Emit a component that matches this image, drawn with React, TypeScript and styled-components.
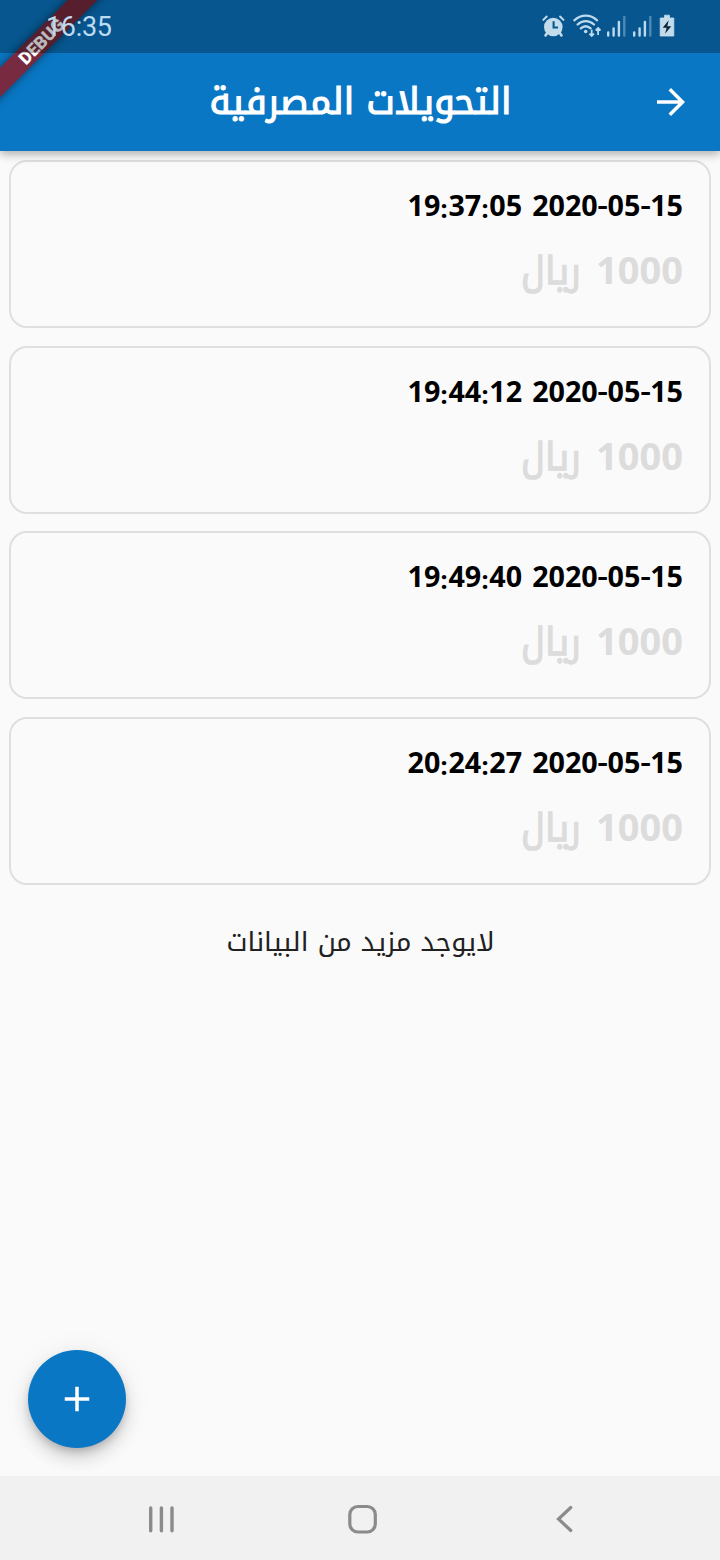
import React from "react";
import styled, { createGlobalStyle } from "styled-components";

const Global = createGlobalStyle`
  * { box-sizing: border-box; }
  html, body { margin: 0; padding: 0; background: #fafafa; }
`;

const Screen = styled.div`
  position: relative;
  display: flex;
  flex-direction: column;
  width: 720px;
  height: 1560px;
  overflow: hidden;
  background: #fafafa;
  font-family: "Noto Sans", "Noto Kufi Arabic", "DejaVu Sans", sans-serif;
`;

const Header = styled.header`
  position: relative;
  z-index: 1;
  flex: none;
  height: 151px;
  background: #0a77c5;
  box-shadow: 0 3px 7px rgba(0, 0, 0, 0.2), 0 7px 9px rgba(0, 0, 0, 0.06), 0 2px 14px rgba(0, 0, 0, 0.05);
`;

const StatusBar = styled.div`
  position: relative;
  z-index: 2;
  height: 53px;
  padding: 0 45px 0 46px;
  display: flex;
  align-items: center;
  justify-content: space-between;
  background: rgba(0, 0, 0, 0.27);
`;

const Clock = styled.span`
  padding-top: 1px;
  font: 400 27px/53px Roboto, sans-serif;
  letter-spacing: -0.3px;
  color: #bcdaf0;
`;

const StatusIcons = styled.svg`
  display: block;
  width: 135px;
  height: 28px;
`;

const TitleBar = styled.div`
  height: 98px;
  padding: 0 28px;
  display: grid;
  grid-template-columns: 42px 1fr 42px;
  align-items: center;
  direction: rtl;
`;

const Title = styled.h1`
  margin: 0;
  padding-left: 1px;
  text-align: center;
  font-family: "Noto Kufi Arabic", "DejaVu Sans", sans-serif;
  font-size: 36.4px;
  font-weight: 400;
  line-height: 56px;
  color: #fff;
  -webkit-text-stroke: 1.2px #fff;
  white-space: nowrap;
`;

const Banner = styled.div`
  position: absolute;
  z-index: 1;
  top: 31px;
  left: -59px;
  width: 200px;
  height: 21px;
  padding-left: 1px;
  transform: rotate(-45deg);
  background: #782b40;
  box-shadow: 0 0 10px rgba(0, 0, 0, 0.5);
  color: #fff;
  text-align: center;
  font: 900 17.6px/22px Roboto, sans-serif;
`;

const List = styled.main`
  flex: 1;
  display: flex;
  flex-direction: column;
  gap: 17.6px;
  padding: 9px 9px 0;
  direction: rtl;
`;

const Card = styled.article`
  flex: none;
  height: 168px;
  padding: 22px 26px 0;
  border: 2px solid #dfdfdf;
  border-radius: 18px;
`;

const Stamp = styled.div`
  display: flex;
  gap: 10px;
  height: 42px;
  line-height: 42px;
  font-size: 28.7px;
  font-weight: 700;
  color: #000;
`;

const Ltr = styled.span`
  direction: ltr;
  white-space: nowrap;
`;

const Colon = styled.span`
  display: inline-block;
  transform: translateY(3px) scale(0.88);
`;

const Hyphen = styled.span`
  display: inline-block;
  margin: 0 0.3px;
  transform: scale(1.12, 0.85);
`;

const Amount = styled.div`
  display: flex;
  gap: 15px;
  height: 54px;
  margin-top: 16px;
  line-height: 54px;
  font-size: 38px;
  font-weight: 700;
  color: #dcdcdc;
`;

const Unit = styled.span`
  font-family: "Noto Kufi Arabic", "DejaVu Sans", sans-serif;
  font-size: 38px;
  font-weight: 400;
  -webkit-text-stroke: 1.4px #dcdcdc;
  transform: translateY(2px) scaleX(0.92);
  transform-origin: right center;
`;

const Footer = styled.p`
  margin: 21px 0 0;
  padding-left: 1px;
  text-align: center;
  font-family: "Noto Kufi Arabic", "DejaVu Sans", sans-serif;
  font-size: 26.9px;
  line-height: 40px;
  color: #212121;
`;

const Fab = styled.button`
  position: absolute;
  left: 28px;
  top: 1350px;
  width: 98px;
  height: 98px;
  padding: 0;
  border: 0;
  border-radius: 50%;
  display: grid;
  place-items: center;
  background: #0a77c5;
  box-shadow: 0 5px 9px -2px rgba(0, 0, 0, 0.2), 0 10px 17px rgba(0, 0, 0, 0.14), 0 2px 31px rgba(0, 0, 0, 0.06);
`;

const NavBar = styled.nav`
  flex: none;
  height: 84px;
  display: grid;
  grid-template-columns: 200.5px 203px 30px;
  align-items: center;
  padding: 2px 0 0 146px;
  background: #f1f1f1;
`;

const times = ["19:37:05", "19:44:12", "19:49:40", "20:24:27"];

const Time = ({ value }: { value: string }) => (
  <Ltr>
    {value.split(":").map((part, i) => (
      <React.Fragment key={i}>
        {i > 0 && <Colon>:</Colon>}
        {part}
      </React.Fragment>
    ))}
  </Ltr>
);

const Day = ({ value }: { value: string }) => (
  <Ltr>
    {value.split("-").map((part, i) => (
      <React.Fragment key={i}>
        {i > 0 && <Hyphen>-</Hyphen>}
        {part}
      </React.Fragment>
    ))}
  </Ltr>
);

const Signal = ({ x }: { x: number }) => (
  <g transform={`translate(${x} 0)`} stroke="#bcdaf0" strokeWidth="2.4" strokeLinecap="round">
    <path d="M1.2 19.5v3M6.6 15.5v7M11.9 9v13.5" />
    <path d="M17.3 4v18.5" opacity=".4" />
  </g>
);

export default function App() {
  return (
    <Screen>
      <Global />
      <Header>
        <StatusBar>
          <Clock>16:35</Clock>
          <StatusIcons viewBox="0 0 135 28" fill="none">
            <circle cx="13.3" cy="14" r="9.3" fill="#c3dcec" />
            <path d="M7.5 19.5l-2 3M19.5 19.5l2 3" stroke="#c3dcec" strokeWidth="2.6" strokeLinecap="round" />
            <path d="M3.3 6.9l3.4-3.4M20.1 3.5l3.4 3.4" stroke="#c3dcec" strokeWidth="2" strokeLinecap="round" />
            <path d="M13.6 8.3v6.2h4.4" stroke="#085890" strokeWidth="2.1" />
            <g stroke="#bcdaf0" strokeWidth="2.3" strokeLinecap="round">
              <path d="M34.3 7.3c7-6.2 16-6.2 22.8 0M37.6 11.5c5-4.6 11.4-4.6 16.4 0M40.8 15.4c3.1-2.7 6.8-2.7 9.8 0" />
            </g>
            <circle cx="45.7" cy="18.5" r="1.8" fill="#bcdaf0" />
            <path d="M51.7 16.7v6M49.4 20.7l2.3 2.3 2.3-2.3M58.1 22v-6.5M55.7 17.5l2.4-2.4 2.4 2.4" stroke="#bcdaf0" strokeWidth="1.8" />
            <Signal x={67} />
            <Signal x={93} />
            <path d="M124.5 2.2h5v2.8h4.3v18h-13.6V5h4.3z" fill="#c3dcec" stroke="#c3dcec" strokeWidth=".8" strokeLinejoin="round" />
            <path d="M128.7 7.3l-6 7.4h4l-1.7 6.1 6.3-7.6h-4z" fill="#0b2438" />
          </StatusIcons>
        </StatusBar>
        <TitleBar>
          <svg width="42" height="42" viewBox="0 0 24 24" fill="#fff">
            <path d="M12 4l-1.41 1.41L16.17 11H4v2h12.17l-5.58 5.59L12 20l8-8z" />
          </svg>
          <Title>التحويلات المصرفية</Title>
        </TitleBar>
        <Banner>DEBUG</Banner>
      </Header>
      <List>
        {times.map((time) => (
          <Card key={time}>
            <Stamp>
              <Day value="2020-05-15" />
              <Time value={time} />
            </Stamp>
            <Amount>
              <span>1000</span>
              <Unit>ريال</Unit>
            </Amount>
          </Card>
        ))}
        <Footer>لايوجد مزيد من البيانات</Footer>
      </List>
      <Fab aria-label="إضافة">
        <svg width="42" height="42" viewBox="0 0 24 24" fill="#fff">
          <path d="M19 13h-6v6h-2v-6H5v-2h6V5h2v6h6v2z" />
        </svg>
      </Fab>
      <NavBar>
        <svg width="30" height="30" viewBox="0 0 30 30" stroke="#8b8b8b" strokeWidth="3.4" strokeLinecap="round">
          <path d="M4.7 4v22.7M15.4 4v22.7M26 4v22.7" />
        </svg>
        <svg width="30" height="30" viewBox="0 0 30 30" fill="none" stroke="#8b8b8b" strokeWidth="3.2">
          <rect x="2.8" y="2.5" width="25.5" height="25.5" rx="8" />
        </svg>
        <svg width="30" height="30" viewBox="0 0 30 30" fill="none" stroke="#8b8b8b" strokeWidth="3.2" strokeLinecap="round">
          <path d="M20.8 3.5L8.5 15l12.3 11.5" />
        </svg>
      </NavBar>
    </Screen>
  );
}
